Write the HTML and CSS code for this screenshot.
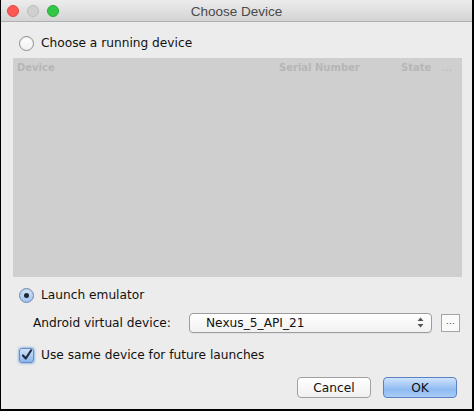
FILE: index.html
```html
<!DOCTYPE html>
<html>
<head>
<meta charset="utf-8">
<link rel="stylesheet" href="styles.css">
</head>
<body>
<div class="window">
  <div class="titlebar">
    <div class="lights">
      <span class="light red"></span>
      <span class="light grey"></span>
      <span class="light green"></span>
    </div>
    <div class="title">Choose Device</div>
  </div>
  <div class="content">
    <label class="row radio-row first">
      <span class="radio"></span>
      <span>Choose a running device</span>
    </label>
    <div class="table">
      <div class="thead">
        <span class="col-device">Device</span>
        <span class="col-serial">Serial Number</span>
        <span class="col-state">State</span>
        <span class="col-more">…</span>
      </div>
    </div>
    <label class="row radio-row second">
      <span class="radio checked"><span class="dot"></span></span>
      <span>Launch emulator</span>
    </label>
    <div class="row avd-row">
      <span class="avd-label">Android virtual device:</span>
      <div class="combo">
        <span class="combo-text">Nexus_5_API_21</span>
        <svg class="stepper" width="7" height="11" viewBox="0 0 7 11">
          <path d="M0.5 4 L3.5 0.5 L6.5 4 Z" fill="#555"/>
          <path d="M0.5 7 L3.5 10.5 L6.5 7 Z" fill="#555"/>
        </svg>
      </div>
      <div class="more-btn">…</div>
    </div>
    <label class="row check-row">
      <span class="checkbox">
        <svg width="12" height="12" viewBox="0 0 12 12">
          <path d="M2 6.5 L4.8 9.5 L10 1.5" fill="none" stroke="#1f2a44" stroke-width="2.2" stroke-linecap="round" stroke-linejoin="round"/>
        </svg>
      </span>
      <span>Use same device for future launches</span>
    </label>
    <div class="buttons">
      <div class="btn">Cancel</div>
      <div class="btn primary">OK</div>
    </div>
  </div>
</div>
</body>
</html>
```

FILE: styles.css
```css
* { box-sizing: border-box; }
html, body { margin: 0; padding: 0; }
body {
  width: 474px;
  height: 411px;
  overflow: hidden;
  background: #000;
  font-family: "DejaVu Sans", "Liberation Sans", sans-serif;
  font-size: 12px;
  color: #111;
}
.window {
  width: 471px;
  height: 409px;
  margin-left: 1px;
  background: #ececec;
  display: flex;
  flex-direction: column;
}
.titlebar {
  height: 22px;
  flex: none;
  position: relative;
  background: linear-gradient(#ececec, #d4d4d4);
  border-bottom: 1px solid #b0b0b0;
  display: flex;
  align-items: center;
  justify-content: center;
}
.lights {
  position: absolute;
  left: 6px;
  top: 5px;
  display: flex;
  gap: 8px;
}
.light {
  width: 12px;
  height: 12px;
  border-radius: 50%;
  display: block;
}
.red { background: #fc5753; border: 1px solid #df4744; }
.grey { background: #d0d0d0; border: 1px solid #bcbcbc; }
.green { background: #33c748; border: 1px solid #27aa35; }
.title {
  font-family: "Liberation Sans", "Helvetica", sans-serif;
  font-size: 13.5px;
  color: #4a4a4a;
  padding-top: 1px;
}
.content {
  flex: 1;
  display: flex;
  flex-direction: column;
  padding: 0 10px 0 11px;
}
.row {
  display: flex;
  align-items: center;
}
.radio-row { gap: 7px; padding-left: 7px; font-size: 12.2px; }
.first { height: 14px; margin-top: 14px; }
.radio {
  width: 15px;
  height: 15px;
  border-radius: 50%;
  border: 1px solid #8e8e8e;
  background: linear-gradient(#ffffff, #f0f0f0);
  box-shadow: inset 0 1px 1px rgba(0,0,0,0.1);
  display: flex;
  align-items: center;
  justify-content: center;
  flex: none;
}
.radio.checked {
  border-color: #6f88b0;
  background: linear-gradient(#d6e6fa, #9fc3ee);
}
.dot {
  width: 5px;
  height: 5px;
  border-radius: 50%;
  background: #1d2838;
}
.table {
  margin-top: 8px;
  height: 219px;
  width: 449px;
  background: #cfcfcf;
  margin-left: 1px;
}
.thead {
  display: flex;
  font-size: 10px;
  font-weight: bold;
  color: #b6b6b6;
  padding-top: 4px;
  height: 16px;
}
.col-device { padding-left: 4px; width: 266px; }
.col-serial { width: 122px; }
.col-state { width: 41px; }
.col-more { font-weight: normal; }
.second { height: 16px; margin-top: 10px; }
.avd-row { margin-top: 9px; height: 21px; }
.avd-label { width: 177px; padding-left: 21px; font-size: 12.2px; }
.combo {
  width: 243px;
  height: 20px;
  border: 1px solid #9d9d9d;
  border-radius: 4px;
  background: linear-gradient(#ffffff, #f1f1f1);
  display: flex;
  align-items: center;
  padding-left: 16px;
  padding-right: 7px;
  font-size: 12.2px;
  box-shadow: 0 1px 0 rgba(0,0,0,0.05);
}
.combo-text { flex: 1; }
.more-btn {
  margin-left: 9px;
  width: 19px;
  height: 18px;
  border: 1px solid #a4a4a4;
  background: #fafafa;
  font-size: 9px;
  color: #444;
  display: flex;
  align-items: flex-start;
  justify-content: center;
  line-height: 13px;
}
.check-row { margin-top: 14px; gap: 7px; padding-left: 7px; height: 16px; font-size: 12.2px; }
.checkbox {
  width: 15px;
  height: 15px;
  border-radius: 3px;
  border: 1px solid #6a8ac0;
  background: linear-gradient(#cfe2fb, #8cb7ec);
  box-shadow: 0 0 2px 1px rgba(90,150,230,0.55);
  display: flex;
  align-items: center;
  justify-content: center;
  flex: none;
}
.buttons {
  display: flex;
  justify-content: flex-end;
  gap: 12px;
  margin-top: 14px;
  padding-right: 5px;
}
.btn {
  width: 74px;
  height: 21px;
  border: 1px solid #a0a0a0;
  border-radius: 4px;
  background: linear-gradient(#ffffff, #f0f0f0);
  display: flex;
  align-items: center;
  justify-content: center;
  font-size: 12.2px;
  color: #111;
}
.primary {
  border-color: #5a81c4;
  background: linear-gradient(#cfe3fb, #8fbaf1 60%, #a9ccf6);
}
```
